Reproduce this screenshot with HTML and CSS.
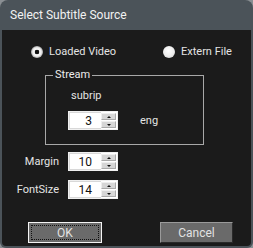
FILE: index.html
```html
<!DOCTYPE html>
<html>
<head>
<meta charset="utf-8">
<link rel="stylesheet" href="styles.css">
</head>
<body>
<div class="window">
  <div class="titlebar">Select Subtitle Source</div>
  <div class="content">
    <div class="radios">
      <div class="radio-item first"><span class="radio checked"></span><span>Loaded Video</span></div>
      <div class="radio-item"><span class="radio"></span><span>Extern File</span></div>
    </div>
    <fieldset class="group">
      <legend>Stream</legend>
      <div class="codec">subrip</div>
      <div class="spin-row">
        <div class="spin"><div class="spin-value">3</div><div class="spin-btns"><div class="sb up"></div><div class="sb down"></div></div></div>
        <span class="lang">eng</span>
      </div>
    </fieldset>
    <div class="field first-field">
      <span class="label">Margin</span>
      <div class="spin"><div class="spin-value">10</div><div class="spin-btns"><div class="sb up"></div><div class="sb down"></div></div></div>
    </div>
    <div class="field second-field">
      <span class="label">FontSize</span>
      <div class="spin"><div class="spin-value">14</div><div class="spin-btns"><div class="sb up"></div><div class="sb down"></div></div></div>
    </div>
    <div class="buttons">
      <div class="btn ok"><span class="focus">OK</span></div>
      <div class="btn cancel">Cancel</div>
    </div>
  </div>
</div>
</body>
</html>
```
FILE: styles.css
```css
html, body {
  margin: 0;
  padding: 0;
  background: #8a8f93;
}
body {
  font-family: Roboto, "Liberation Sans", sans-serif;
  font-size: 11px;
  color: #e4e4e4;
}
.window {
  width: 253px;
  height: 248px;
  background: #4b5359;
  border-radius: 8px 8px 6px 6px;
  overflow: hidden;
  display: flex;
  flex-direction: column;
}
.titlebar {
  height: 30px;
  line-height: 31px;
  padding-left: 10px;
  font-size: 12px;
  color: #f2f2f2;
  flex: none;
}
.content {
  flex: 1;
  margin: 0 2px 2px 2px;
  background: #1b1b1b;
  border-radius: 0 0 4px 4px;
  display: flex;
  flex-direction: column;
}
.radios {
  display: flex;
  margin-top: 16px;
  padding-left: 29px;
  height: 12px;
  align-items: center;
}
.radio-item {
  display: flex;
  align-items: center;
  gap: 6px;
  line-height: 14px;
}
.radio-item.first {
  width: 132px;
}
.radio {
  width: 12px;
  height: 12px;
  border-radius: 50%;
  box-sizing: border-box;
  background: radial-gradient(circle at 45% 40%, #ffffff 0%, #ececec 55%, #c4c4c4 100%);
  flex: none;
}
.radio.checked {
  background: radial-gradient(circle, #111 0, #111 2px, #f6f6f6 2.6px, #efefef 4.2px, #a8a8a8 6px);
}
.group {
  margin: 10px 0 0 43px;
  width: 159px;
  box-sizing: border-box;
  border: 1px solid #a8a8a8;
  padding: 0 0 14px 22px;
  min-width: 0;
}
.group legend {
  margin-left: -15px;
  padding: 0 2px;
  line-height: 14px;
  color: #ececec;
}
.codec {
  margin: 7px 0 0 3px;
  line-height: 14px;
}
.spin-row {
  display: flex;
  align-items: center;
  margin-top: 8px;
  gap: 22px;
}
.spin {
  width: 50px;
  height: 19px;
  box-sizing: border-box;
  background: #ffffff;
  border: 1px solid #f0f0f0;
  display: flex;
  flex: none;
}
.spin-value {
  flex: 1;
  text-align: right;
  padding-right: 9px;
  color: #111;
  font-size: 12px;
  line-height: 17px;
  border: 1px solid #d8d8d8;
  border-right: none;
}
.spin-btns {
  width: 15px;
  display: flex;
  flex-direction: column;
  padding: 1px 1px 1px 0;
  gap: 1px;
  background: #ffffff;
}
.sb {
  flex: 1;
  background: #d6d6d6;
  border: 1px solid #a9a9a9;
  border-top-color: #efefef;
  border-left-color: #efefef;
  position: relative;
}
.sb::after {
  content: "";
  position: absolute;
  left: 50%;
  top: 50%;
  margin-left: -2px;
  margin-top: -1px;
  border-left: 2px solid transparent;
  border-right: 2px solid transparent;
}
.sb.up::after {
  border-bottom: 2px solid #111;
}
.sb.down::after {
  border-top: 2px solid #111;
}
.field {
  display: flex;
  align-items: center;
  gap: 9px;
}
.field .label {
  width: 57px;
  text-align: right;
  line-height: 14px;
}
.first-field {
  margin-top: 7px;
}
.second-field {
  margin-top: 9px;
}
.buttons {
  display: flex;
  margin-top: 23px;
  padding-left: 26px;
  gap: 58px;
}
.btn {
  height: 21px;
  box-sizing: border-box;
  background: #6a6a6a;
  color: #e2e2e2;
  font-size: 12px;
  display: flex;
  align-items: center;
  justify-content: center;
}
.btn.ok {
  width: 74px;
  border: 1px solid #f4f4f4;
  padding: 2px;
}
.btn.ok .focus {
  flex: 1;
  align-self: stretch;
  border: 1px dotted #111;
  display: flex;
  align-items: center;
  justify-content: center;
}
.btn.cancel {
  width: 73px;
  border: 1px solid #2a2a2a;
  border-top-color: #9a9a9a;
  border-left-color: #9a9a9a;
}
```
